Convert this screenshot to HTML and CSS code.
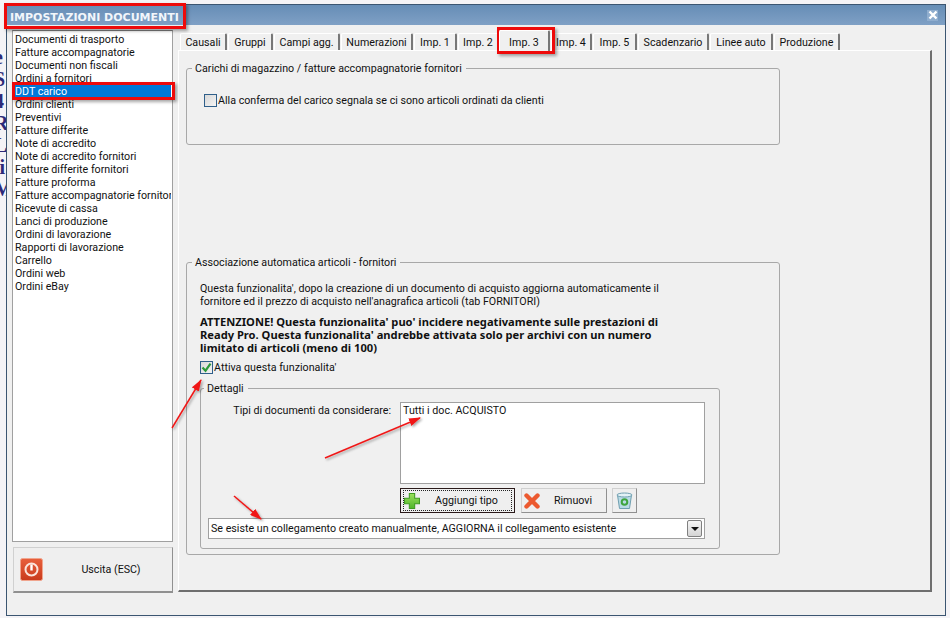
FILE: index.html
```html
<!doctype html>
<html lang="en">
<head>
    <meta charset="UTF-8">
    <title>Impostazioni documenti</title>
    <link rel="stylesheet" href="styles.css">
</head>
<body>
    <div class="backdrop">
        <span>e</span><span>S</span><span>4</span><span>R</span><span>L</span><span>ii</span><span>M</span>
    </div>
    <div class="window">
        <div class="titlebar">
            <span class="title">IMPOSTAZIONI DOCUMENTI</span>
            <span class="close">
                <svg width="10" height="10" viewBox="0 0 10 10"><path d="M1.5 1.5l7 7M8.5 1.5l-7 7" stroke="#fff" stroke-width="2.4"/></svg>
            </span>
        </div>
        <div class="content">
            <div class="sidebar">
                <ul class="doclist">
                    <li>Documenti di trasporto</li>
                    <li>Fatture accompagnatorie</li>
                    <li>Documenti non fiscali</li>
                    <li>Ordini a fornitori</li>
                    <li class="selected">DDT carico</li>
                    <li>Ordini clienti</li>
                    <li>Preventivi</li>
                    <li>Fatture differite</li>
                    <li>Note di accredito</li>
                    <li>Note di accredito fornitori</li>
                    <li>Fatture differite fornitori</li>
                    <li>Fatture proforma</li>
                    <li>Fatture accompagnatorie fornitori</li>
                    <li>Ricevute di cassa</li>
                    <li>Lanci di produzione</li>
                    <li>Ordini di lavorazione</li>
                    <li>Rapporti di lavorazione</li>
                    <li>Carrello</li>
                    <li>Ordini web</li>
                    <li>Ordini eBay</li>
                </ul>
                <div class="btn exit">
                    <svg class="exit-icon" width="23" height="23" viewBox="0 0 23 23">
                        <defs>
                            <linearGradient id="exit-bg" x1="0" y1="0" x2="0" y2="1">
                                <stop offset="0" stop-color="#e8603c"/>
                                <stop offset="1" stop-color="#c93a1c"/>
                            </linearGradient>
                        </defs>
                        <rect x="0.5" y="0.5" width="22" height="22" rx="2" fill="url(#exit-bg)" stroke="#f0a58e"/>
                        <circle cx="11.5" cy="11.5" r="6" fill="none" stroke="#fbe3da" stroke-width="2"/>
                        <path d="M11.5 6.5v6" stroke="#fff" stroke-width="2.4"/>
                    </svg>
                    <span>Uscita (ESC)</span>
                </div>
            </div>
            <div class="main">
                <div class="tabs">
                    <span class="tab t1">Causali</span>
                    <span class="tab t2">Gruppi</span>
                    <span class="tab t3">Campi agg.</span>
                    <span class="tab t4">Numerazioni</span>
                    <span class="tab t5">Imp. 1</span>
                    <span class="tab t6">Imp. 2</span>
                    <span class="tab active">Imp. 3</span>
                    <span class="tab t8">Imp. 4</span>
                    <span class="tab t9">Imp. 5</span>
                    <span class="tab t10">Scadenzario</span>
                    <span class="tab t11">Linee auto</span>
                    <span class="tab t12">Produzione</span>
                </div>
                <div class="panel">
                    <fieldset class="group group-carichi">
                        <legend>Carichi di magazzino / fatture accompagnatorie fornitori</legend>
                        <label class="check">
                            <span class="box"></span>
                            Alla conferma del carico segnala se ci sono articoli ordinati da clienti
                        </label>
                    </fieldset>
                    <fieldset class="group group-assoc">
                        <legend>Associazione automatica articoli - fornitori</legend>
                        <div class="assoc-body">
                            <p class="note">Questa funzionalita', dopo la creazione di un documento di acquisto aggiorna automaticamente il<br>fornitore ed il prezzo di acquisto nell'anagrafica articoli (tab FORNITORI)</p>
                            <p class="warning">ATTENZIONE! Questa funzionalita' puo' incidere negativamente sulle prestazioni di<br>Ready Pro. Questa funzionalita' andrebbe attivata solo per archivi con un numero<br>limitato di articoli (meno di 100)</p>
                            <label class="check check-on">
                                <span class="box">
                                    <svg width="11" height="11" viewBox="0 0 11 11"><path d="M1.5 5.5l3 3.2 5-7" fill="none" stroke="#2c9a3a" stroke-width="2.2"/></svg>
                                </span>
                                Attiva questa funzionalita'
                            </label>
                            <fieldset class="group details">
                                <legend>Dettagli</legend>
                                <div class="types">
                                    <span class="types-label">Tipi di documenti da considerare:</span>
                                    <div class="types-box">Tutti i doc. ACQUISTO</div>
                                </div>
                                <div class="actions">
                                    <div class="btn add">
                                        <span class="focus">
                                            <svg width="16" height="16" viewBox="0 0 15 15">
                                                <defs>
                                                    <linearGradient id="plus-bg" x1="0" y1="0" x2="0" y2="1">
                                                        <stop offset="0" stop-color="#9be05c"/>
                                                        <stop offset="1" stop-color="#4fb52a"/>
                                                    </linearGradient>
                                                </defs>
                                                <path d="M5 .5h5v4.500h4.500v5H10v4.500H5V10H.5V5H5z" fill="url(#plus-bg)" stroke="#3f9a22"/>
                                            </svg>
                                            <span>Aggiungi tipo</span>
                                        </span>
                                    </div>
                                    <div class="btn remove">
                                        <svg width="16" height="16" viewBox="0 0 16 16"><path d="M2.500 2.500l11 11M13.500 2.500l-11 11" stroke="#ec5a30" stroke-width="4.400" stroke-linecap="round"/></svg>
                                        <span>Rimuovi</span>
                                    </div>
                                    <div class="btn trash">
                                        <svg width="17" height="18" viewBox="0 0 17 18">
                                            <path d="M1.500 3l2 13.500h10l2-13.500z" fill="#b9dbe6" stroke="#6f9fb0"/>
                                            <ellipse cx="8.500" cy="3" rx="7.500" ry="2" fill="#e3f1f6" stroke="#6f9fb0"/>
                                            <circle cx="8.500" cy="10" r="2.800" fill="none" stroke="#3fa53f" stroke-width="2"/>
                                        </svg>
                                    </div>
                                </div>
                                <div class="combo">
                                    <span>Se esiste un collegamento creato manualmente, AGGIORNA il collegamento esistente</span>
                                    <span class="combo-btn"></span>
                                </div>
                            </fieldset>
                        </div>
                    </fieldset>
                </div>
            </div>
        </div>
    </div>

    <!-- annotations drawn over the screenshot -->
    <div class="mark mark-title"></div>
    <div class="mark mark-row"></div>
    <div class="mark mark-tab"></div>
    <svg class="arrows" width="950" height="618" viewBox="0 0 950 618">
        <defs>
            <marker id="head" markerWidth="12" markerHeight="8" refX="11" refY="4" orient="auto" markerUnits="userSpaceOnUse">
                <path d="M0 0L12 4 0 8z" fill="#f01818"/>
            </marker>
            <filter id="soft" x="-20%" y="-20%" width="140%" height="140%">
                <feDropShadow dx="1.500" dy="1.500" stdDeviation="1" flood-color="#000" flood-opacity=".35"/>
            </filter>
        </defs>
        <g stroke="#f01818" stroke-width="1.500" filter="url(#soft)">
            <line x1="172" y1="428" x2="201" y2="380" marker-end="url(#head)"/>
            <line x1="325" y1="458" x2="420" y2="418" marker-end="url(#head)"/>
            <line x1="234" y1="496" x2="261" y2="519" marker-end="url(#head)"/>
        </g>
    </svg>
</body>
</html>
```

FILE: styles.css
```css
body {
    margin: 0;
    width: 950px;
    height: 618px;
    overflow: hidden;
    background-color: #f4f3f6;
    font-family: Roboto, "Liberation Sans", sans-serif;
    font-size: 10.7px;
    color: #111;
}

.backdrop {
    position: absolute;
    left: 0;
    top: 46px;
    width: 6px;
    overflow: hidden;
    display: flex;
    flex-direction: column;
    font-family: "Liberation Serif", serif;
    font-weight: bold;
    font-size: 20px;
    line-height: 22px;
    color: #2c2a78;
}

.backdrop span {
    margin-left: -6px;
}

.window {
    box-sizing: border-box;
    width: 940px;
    height: 612px;
    margin: 4px 0 0 6px;
    border: 1px solid #3b5571;
    background-color: #f0f0f0;
}

.titlebar {
    height: 20px;
    display: flex;
    align-items: center;
    justify-content: space-between;
    background: linear-gradient(#668db6, #7fa0c5);
}

.title {
    padding: 4px 0 0 3px;
    font-family: "DejaVu Sans", sans-serif;
    font-weight: bold;
    font-size: 11px;
    color: #f2f6fb;
}

.close {
    width: 11px;
    height: 11px;
    margin-right: 7px;
    display: flex;
    align-items: center;
    justify-content: center;
    background-color: #8fadce;
}

.content {
    display: flex;
    padding: 5px 12px 0 5px;
    gap: 5px;
}

.sidebar {
    width: 161px;
    flex: none;
}

.doclist {
    box-sizing: border-box;
    height: 512px;
    margin: 0;
    padding: 2px 1px 0 2px;
    list-style: none;
    background-color: #fff;
    border: 1px solid #a0a0a0;
    border-top-color: #808080;
    overflow: hidden;
}

.doclist li {
    height: 13px;
    line-height: 13px;
    white-space: nowrap;
    overflow: hidden;
}

.doclist .selected {
    background-color: #0078d7;
    color: #fff;
}

.btn {
    box-sizing: border-box;
    display: flex;
    align-items: center;
    background-color: #efefef;
    border: 1px solid #d0d0d0;
    border-right-color: #909090;
    border-bottom-color: #909090;
}

.exit {
    width: 160px;
    height: 46px;
    margin: 5px 0 0 1px;
    padding-left: 6px;
    border-width: 1px 1px 2px 1px;
}

.exit span {
    flex: 1;
    text-align: center;
    padding-left: 7px;
}

.exit-icon {
    display: block;
}

.main {
    width: 754px;
    flex: none;
}

.tabs {
    display: flex;
    height: 20px;
    align-items: flex-end;
    padding-left: 2px;
}

.tab {
    box-sizing: border-box;
    height: 17px;
    line-height: 18px;
    text-align: center;
    white-space: nowrap;
    margin-right: 1px;
    background-color: #f0f0f0;
    border: 1px solid #fff;
    border-bottom: 0;
    border-right: 2px solid #777;
    border-radius: 2px 2px 0 0;
}

.t1 { width: 47px; }
.t2 { width: 45px; }
.t3 { width: 66px; }
.t4 { width: 72px; }
.t5 { width: 43px; }
.t6 { width: 41px; margin-right: 0; }
.t8 { width: 41px; }
.t9 { width: 44px; }
.t10 { width: 71px; }
.t11 { width: 63px; }
.t12 { width: 66px; }

.tab.active {
    width: 51px;
    height: 21px;
    line-height: 23px;
    position: relative;
    z-index: 1;
    margin-bottom: -1px;
}

.panel {
    box-sizing: border-box;
    width: 754px;
    height: 542px;
    padding: 11px 0 0 7px;
    border-top: 1px solid #fff;
    border-left: 1px solid #fff;
    border-right: 2px solid #6e6e6e;
    border-bottom: 2px solid #6e6e6e;
}

.group {
    box-sizing: border-box;
    margin: 0;
    padding: 0;
    min-width: 0;
    border: 1px solid #a8a8a8;
    border-radius: 3px;
}

.group legend {
    padding: 0 4px 0 3px;
    margin-left: 5px;
    line-height: 13px;
}

.group-carichi {
    width: 594px;
    height: 83px;
}

.group-carichi .check {
    margin: 18px 0 0 17px;
}

.group-assoc {
    width: 594px;
    height: 299px;
    margin-top: 111px;
}

.assoc-body {
    padding: 13px 0 0 13px;
}

.check {
    display: flex;
    align-items: center;
    gap: 1px;
    height: 15px;
}

.box {
    box-sizing: border-box;
    width: 13px;
    height: 13px;
    display: flex;
    align-items: center;
    justify-content: center;
    border: 1px solid #2f5f8a;
    background: linear-gradient(135deg, #d8d8d8, #f4f4f4);
}

.note,
.warning {
    margin: 0;
    line-height: 13px;
    white-space: nowrap;
}

.warning {
    margin-top: 7px;
    font-family: "Noto Sans", sans-serif;
    font-size: 11.15px;
    font-weight: bold;
}

.check-on {
    margin-top: 6px;
}

.details {
    width: 520px;
    height: 167px;
    margin: 7px 0 0 0;
}

.details legend {
    margin-left: 3px;
}

.types {
    display: flex;
    height: 82px;
    margin: 7px 0 0 7px;
}

.types-label {
    width: 183px;
    margin-right: 9px;
    padding-top: 2px;
    text-align: right;
}

.types-box {
    box-sizing: border-box;
    width: 305px;
    height: 82px;
    padding: 1px 2px;
    background-color: #fff;
    border: 1px solid #a0a0a0;
}

.actions {
    display: flex;
    height: 25px;
    margin: 4px 0 0 199px;
}

.add {
    width: 115px;
    border: 1px solid #2a1a1a;
    padding: 2px;
    margin-right: 6px;
}

.focus {
    flex: 1;
    height: 100%;
    display: flex;
    align-items: center;
    border: 1px dotted #222;
}

.focus span {
    flex: 1;
    text-align: center;
    padding-left: 2px;
}

.remove {
    width: 86px;
    padding-left: 2px;
    margin-right: 5px;
}

.remove span {
    flex: 1;
    text-align: center;
}

.trash {
    width: 25px;
    justify-content: center;
}

.combo {
    box-sizing: border-box;
    display: flex;
    align-items: center;
    justify-content: space-between;
    width: 497px;
    height: 21px;
    margin: 5px 0 0 7px;
    padding: 0 2px;
    background-color: #fff;
    border: 1px solid #a0a0a0;
    white-space: nowrap;
}

.combo-btn {
    box-sizing: border-box;
    width: 15px;
    height: 17px;
    position: relative;
    border: 1px solid #808080;
    border-radius: 2px;
    background: linear-gradient(#f6f6f6, #d4d4d4);
}

.combo-btn::after {
    content: "";
    position: absolute;
    left: 3px;
    top: 6px;
    border-left: 4px solid transparent;
    border-right: 4px solid transparent;
    border-top: 4px solid #111;
}

/* red annotations on top of the window */
.mark {
    position: absolute;
    box-sizing: border-box;
    border: 3px solid #ee0a0a;
    box-shadow: 2px 2px 3px rgba(0, 0, 0, 0.35);
}

.mark-title {
    left: 4px;
    top: 3px;
    width: 182px;
    height: 26px;
}

.mark-row {
    left: 12px;
    top: 82px;
    width: 163px;
    height: 18px;
}

.mark-tab {
    left: 497px;
    top: 27px;
    width: 58px;
    height: 27px;
}

.arrows {
    position: absolute;
    left: 0;
    top: 0;
    pointer-events: none;
}
```
